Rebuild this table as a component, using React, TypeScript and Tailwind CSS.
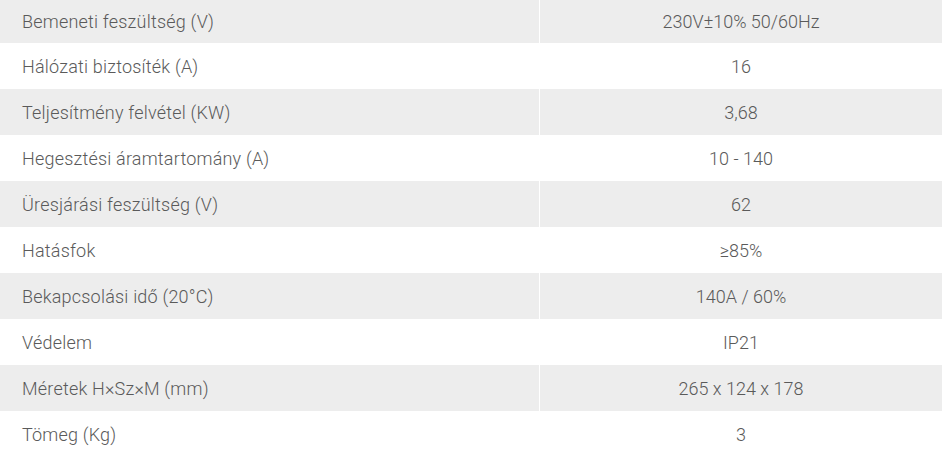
const rows: [string, string][] = [
  ["Bemeneti feszültség (V)", "230V±10% 50/60Hz"],
  ["Hálózati biztosíték (A)", "16"],
  ["Teljesítmény felvétel (KW)", "3,68"],
  ["Hegesztési áramtartomány (A)", "10 - 140"],
  ["Üresjárási feszültség (V)", "62"],
  ["Hatásfok", "≥85%"],
  ["Bekapcsolási idő (20°C)", "140A / 60%"],
  ["Védelem", "IP21"],
  ["Méretek H×Sz×M (mm)", "265 x 124 x 178"],
  ["Tömeg (Kg)", "3"],
];

export default function App() {
  return (
    <div className="w-[942px] h-[457px] overflow-hidden bg-white font-['Roboto_Light','Roboto',sans-serif] font-light text-[18px] text-[#5a5a5a]">
      {rows.map(([label, value], i) => (
        <div
          key={label}
          className={`flex items-center ${i === 0 ? "h-[43px]" : "h-[46px]"} ${i % 2 === 0 ? "bg-[#ededed]" : "bg-white"}`}
        >
          <div className="w-[540px] pl-[22px] border-r border-white h-full flex items-center tracking-[0.2px]">{label}</div>
          <div className="flex-1 text-center">{value}</div>
        </div>
      ))}
    </div>
  );
}
